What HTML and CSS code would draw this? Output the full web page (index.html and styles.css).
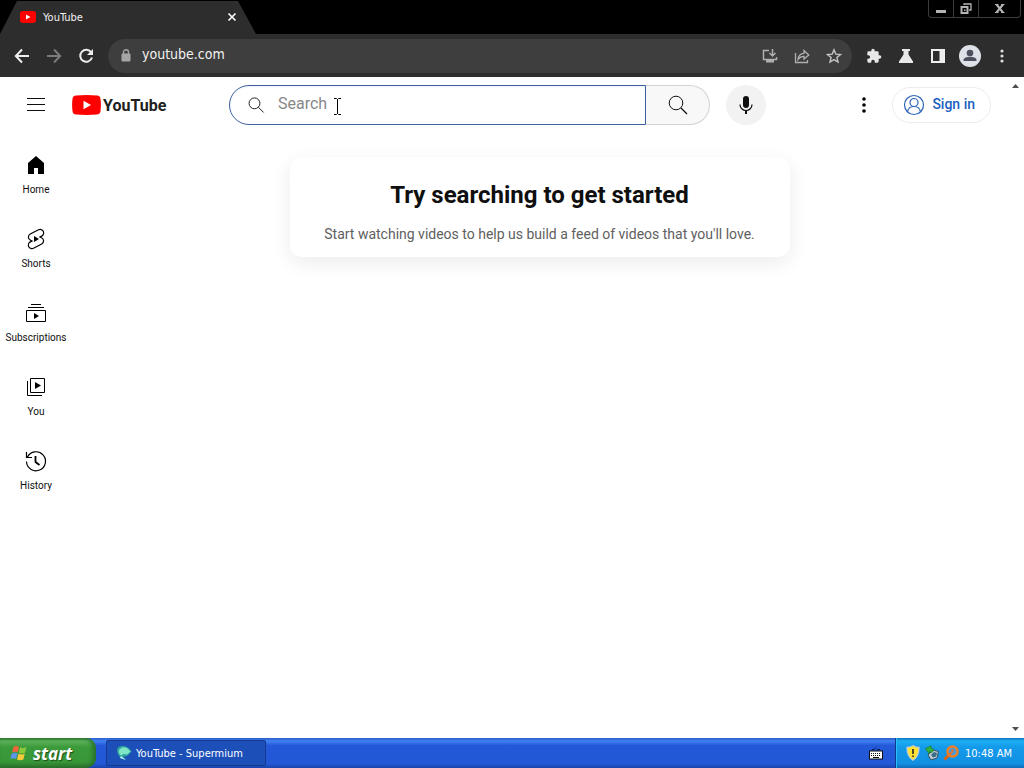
FILE: index.html
```html
<!DOCTYPE html>
<html lang="en">
  <head>
    <meta charset="utf-8" />
    <title>YouTube</title>
    <link rel="stylesheet" href="styles.css">
  </head>
  <body>
    <header class="title-bar">
      <div class="tab">
        <svg class="tab-icon" viewBox="0 0 16 12"><rect width="16" height="12" rx="3" fill="#f00" /><path d="M6 3.5v5L10.5 6z" fill="#fff" /></svg>
        <span class="tab-title">YouTube</span>
        <button class="tab-close" aria-label="Close tab">
          <svg width="10" height="10" viewBox="0 0 10 10"><path d="M1.5 1.5l7 7M8.5 1.5l-7 7" stroke="#fff" stroke-width="1.6" /></svg>
        </button>
      </div>
      <div class="window-controls">
        <button class="win-button" aria-label="Minimize">
          <svg width="12" height="12" viewBox="0 0 12 12"><path d="M1 7h10v3H1z" fill="#b4b4b4" /></svg>
        </button>
        <button class="win-button" aria-label="Restore">
          <svg width="12" height="12" viewBox="0 0 12 12"><path d="M4 2V1h7v6H9" fill="none" stroke="#b4b4b4" stroke-width="1.3" /><path d="M1.500 4h6v6h-6z" fill="none" stroke="#b4b4b4" stroke-width="2" /><path d="M4 6.500h1.500V8H4z" fill="#b4b4b4" /></svg>
        </button>
        <button class="win-button win-close" aria-label="Close">
          <svg width="12" height="12" viewBox="0 0 12 12"><path d="M2.500 1.500l6.500 8M9 1.500l-6.500 8" stroke="#b4b4b4" stroke-width="2" /><path d="M1 1.500h3.500M7 1.500h3.500M1 9.500h3.500M7 9.500h3.500" stroke="#b4b4b4" /></svg>
        </button>
      </div>
    </header>

    <nav class="toolbar">
      <button class="tool-button" aria-label="Back">
        <svg width="16" height="16" viewBox="0 0 16 16"><path d="M15 8H2M8 1.500L1.800 8 8 14.500" fill="none" stroke="#eee" stroke-width="2" /></svg>
      </button>
      <button class="tool-button" aria-label="Forward">
        <svg width="16" height="16" viewBox="0 0 16 16"><path d="M1 8h13M8 1.500L14.200 8 8 14.500" fill="none" stroke="#7a7a7a" stroke-width="2" /></svg>
      </button>
      <button class="tool-button" aria-label="Reload">
        <svg width="16" height="16" viewBox="0 0 16 16"><path d="M13.300 4.500A6 6 0 1 0 14 9.500" fill="none" stroke="#eee" stroke-width="2" /><path d="M15 1v6H9z" fill="#eee" /></svg>
      </button>
      <div class="omnibox">
        <svg width="10" height="13" viewBox="0 0 10 13"><path d="M2.500 5V3.200a2.500 2.500 0 0 1 5 0V5" fill="none" stroke="#a5a5a5" stroke-width="1.400" /><rect x="0.500" y="4.500" width="9" height="8" rx="1" fill="#a5a5a5" /></svg>
        <input class="url" type="text" value="youtube.com" aria-label="Address" />
        <button class="tool-button" aria-label="Install">
          <svg width="16" height="16" viewBox="0 0 16 16"><path d="M7 2.500H1.500v9h13V9" fill="none" stroke="#b0b0b0" stroke-width="1.500" /><path d="M4 12h8v2.500H4z" fill="#b0b0b0" /><path d="M10.500 1v6.500M7.500 5l3 3 3-3" fill="none" stroke="#b0b0b0" stroke-width="1.500" /></svg>
        </button>
        <button class="tool-button" aria-label="Share">
          <svg width="16" height="16" viewBox="0 0 16 16"><path d="M1.500 5v9.500h12V12M4 11.500c.3-4 2.500-6 6-6.200V2.500L14.800 7 10 11V8.300c-3 0-4.500 1-6 3.200z" fill="none" stroke="#b0b0b0" stroke-width="1.300" /></svg>
        </button>
        <button class="tool-button" aria-label="Bookmark">
          <svg width="16" height="16" viewBox="0 0 16 16"><path d="M8 1.800l1.800 4.300 4.700.4-3.600 3 1.100 4.600L8 11.600l-4 2.500 1.100-4.600-3.600-3 4.700-.4z" fill="none" stroke="#c4c4c4" stroke-width="1.400" /></svg>
        </button>
      </div>
      <button class="tool-button" aria-label="Extensions">
        <svg width="16" height="16" viewBox="0 0 24 24"><path d="M20.500 11H19V7a2 2 0 0 0-2-2h-4V3.500a2.500 2.500 0 0 0-5 0V5H4a2 2 0 0 0-2 2v3.800h1.500a2.700 2.700 0 0 1 0 5.400H2V20a2 2 0 0 0 2 2h3.800v-1.500a2.700 2.700 0 0 1 5.400 0V22H17a2 2 0 0 0 2-2v-4h1.500a2.500 2.500 0 0 0 0-5z" fill="#e8e8e8" /></svg>
      </button>
      <button class="tool-button" aria-label="Labs">
        <svg width="16" height="16" viewBox="0 0 16 16"><path d="M4 1h8v2h-1.500v3.500L15 13.500V15H1v-1.500l4.500-7V3H4z" fill="#e8e8e8" /></svg>
      </button>
      <button class="tool-button" aria-label="Side panel">
        <svg width="16" height="16" viewBox="0 0 16 16"><path d="M1 1h14v14H1zM3 3v10h6.500V3z" fill="#eee" fill-rule="evenodd" /></svg>
      </button>
      <button class="tool-button" aria-label="Profile">
        <svg width="22" height="22" viewBox="0 0 22 22"><circle cx="11" cy="11" r="11" fill="#dfe1e8" /><circle cx="11" cy="8" r="3.300" fill="#4c505c" /><path d="M4.500 16v-1c0-2.300 3.500-3.200 6.500-3.200s6.500.9 6.500 3.200v1z" fill="#4c505c" /></svg>
      </button>
      <button class="tool-button" aria-label="Menu">
        <svg width="4" height="14" viewBox="0 0 4 14"><circle cx="2" cy="2" r="1.600" fill="#ddd" /><circle cx="2" cy="7" r="1.600" fill="#ddd" /><circle cx="2" cy="12" r="1.600" fill="#ddd" /></svg>
      </button>
    </nav>

    <div class="viewport">
      <div class="page">
        <div class="masthead">
          <button class="icon-button" aria-label="Guide">
            <svg width="24" height="24" viewBox="0 0 24 24"><path d="M3 5.500h18M3 11.500h18M3 17.500h18" stroke="#0f0f0f" /></svg>
          </button>
          <a class="logo" href="#">
            <svg width="29" height="20" viewBox="0 0 29 20"><path d="M4 .5Q14.500-.4 25 .5q3.200.3 3.500 3.500.8 6 0 12-.3 3.200-3.500 3.500-10.500.9-21 0Q.8 19.200.5 16q-.8-6 0-12Q.8.800 4 .5z" fill="#f00" /><path d="M11.500 5.800v8.400l7.500-4.200z" fill="#fff" /></svg>
            <span>YouTube</span>
          </a>
          <form class="search">
            <div class="search-field">
              <svg width="20" height="20" viewBox="0 0 24 24"><circle cx="9" cy="10" r="6.500" fill="none" stroke="#222" stroke-width="1.200" /><path d="M13.700 14.700l6.300 6.300" stroke="#222" stroke-width="1.200" /></svg>
              <input type="text" placeholder="Search" aria-label="Search" />
              <svg class="cursor" width="9" height="17" viewBox="0 0 9 17"><path d="M1 .5h2.500l1 1 1-1H8M4.500 1v15M1 16.500h2.500l1-1 1 1H8" fill="none" stroke="#000" /></svg>
            </div>
            <button class="search-button" type="button" aria-label="Search">
              <svg width="24" height="24" viewBox="0 0 24 24"><circle cx="10" cy="10" r="6.800" fill="none" stroke="#0f0f0f" /><path d="M15 15l6 6" stroke="#0f0f0f" stroke-width="1.200" /></svg>
            </button>
            <button class="mic-button" type="button" aria-label="Search with your voice">
              <svg width="24" height="24" viewBox="0 0 24 24"><rect x="9" y="3" width="6" height="12" rx="3" fill="#0f0f0f" /><path d="M6 11.500a6 6 0 0 0 12 0" fill="none" stroke="#0f0f0f" stroke-width="1.200" /><path d="M12 17.500V21" stroke="#0f0f0f" stroke-width="2" /></svg>
            </button>
          </form>
          <button class="icon-button" aria-label="Settings">
            <svg width="24" height="24" viewBox="0 0 24 24"><circle cx="12" cy="6" r="1.800" /><circle cx="12" cy="12" r="1.800" /><circle cx="12" cy="18" r="1.800" /></svg>
          </button>
          <a class="sign-in" href="#">
            <svg width="24" height="24" viewBox="0 0 24 24" fill="none" stroke="#2a63b8" stroke-width="1.200"><circle cx="12" cy="12" r="9.500" /><circle cx="12" cy="9.500" r="4" /><path d="M5.500 19c.5-3.500 3-5.500 6.500-5.500s6 2 6.500 5.500" /></svg>
            <span>Sign in</span>
          </a>
        </div>

        <div class="content">
          <nav class="mini-guide">
            <a class="guide-item" href="#">
              <svg width="24" height="24" viewBox="0 0 24 24"><path d="M4 21V10l8-7 8 7v11h-6v-6h-4v6z" /></svg>
              Home
            </a>
            <a class="guide-item" href="#">
              <svg width="24" height="24" viewBox="0 0 24 24"><path d="M14.500 2.800L6.300 7a3.500 3.500 0 0 0 .2 6.300l1.500.7-1.700.9a3.500 3.500 0 0 0 3.200 6.300l8.200-4.200a3.500 3.500 0 0 0-.2-6.300L16 10l1.700-.9a3.500 3.500 0 0 0-3.200-6.300z" fill="none" stroke="#000" stroke-width="1.200" /><path d="M10 9v6l5-3z" /></svg>
              Shorts
            </a>
            <a class="guide-item" href="#">
              <svg width="24" height="24" viewBox="0 0 24 24"><path d="M7 3.500h10M4 6.500h16M2.500 9.500h19v11h-19z" fill="none" stroke="#000" /><path d="M10 12v6l5-3z" /></svg>
              Subscriptions
            </a>
            <a class="guide-item" href="#">
              <svg width="24" height="24" viewBox="0 0 24 24"><path d="M6.500 3.500h14v14h-14zM3.500 6v14.500H18" fill="none" stroke="#000" /><path d="M11 7v7l6-3.500z" /></svg>
              You
            </a>
            <a class="guide-item" href="#">
              <svg width="24" height="24" viewBox="0 0 24 24"><path d="M3.500 8a9.500 9.500 0 1 1-1 4.500M2.500 3v5.500H8" fill="none" stroke="#000" stroke-width="1.200" /><path d="M11.500 7v6l4 3" fill="none" stroke="#000" stroke-width="1.800" /></svg>
              History
            </a>
          </nav>
          <main class="feed">
            <div class="nudge">
              <h1>Try searching to get started</h1>
              <p>Start watching videos to help us build a feed of videos that you'll love.</p>
            </div>
          </main>
        </div>
      </div>
      <div class="scrollbar">
        <svg width="7" height="4" viewBox="0 0 7 4"><path d="M0 4l3.500-4L7 4z" fill="#505050" /></svg>
        <svg width="7" height="4" viewBox="0 0 7 4"><path d="M0 0l3.500 4L7 0z" fill="#505050" /></svg>
      </div>
    </div>

    <footer class="taskbar">
      <button class="start">
        <svg width="18" height="18" viewBox="0 0 18 18"><path d="M3.500 3Q6 1.200 9 2.800L7.700 8.300Q5 7 2 8.500z" fill="#f0653a" /><path d="M10 3.300Q13 4.700 16.500 3L15 8.800q-3 1.500-6.300 0z" fill="#8cc83c" /><path d="M1.800 9.500Q5 8 7.500 9.300L6 15q-3-1.500-5.800 0z" fill="#5a94ee" /><path d="M8.500 9.800q3.200 1.500 6.300 0L13.300 15.500Q10 17 7 15.500z" fill="#fccb3c" /></svg>
        start
      </button>
      <button class="task">
        <svg width="16" height="16" viewBox="0 0 16 16"><path d="M1 6Q1 1 6.500 1q6 0 9 5.500L12 10.500Q9 12 7 11.500L9.500 15Q2 13 1 6z" fill="#2fa39c" /><path d="M3 5Q6 1 11 3l3.500 3.500L11 9.500Q7 8 5 10.500 2 8 3 5z" fill="#7fe5c6" /><path d="M5 11l5 4-6-2z" fill="#b8f4ff" /></svg>
        YouTube - Supermium
      </button>
      <svg class="keyboard" width="14" height="14" viewBox="0 0 14 14"><path d="M3 3.500h2l2-2M8 3.500h3" fill="none" stroke="#0a1a50" /><rect x="0.500" y="5" width="13" height="8" fill="#fff" stroke="#111" /><path d="M2 7.500h10M2 9.500h10" stroke="#111" stroke-dasharray="1 1" /><path d="M4 11.500h6" stroke="#111" /></svg>
      <div class="tray">
        <svg width="16" height="16" viewBox="0 0 16 16"><path d="M8 .8q3 1.700 6 1.700 0 9-6 12.700Q2 11.500 2 2.500q3 0 6-1.700z" fill="#ffe32e" stroke="#c8cdd2" stroke-width="1.300" /><path d="M8 4v5" stroke="#222" stroke-width="1.600" /><path d="M8 10.500v1.600" stroke="#222" stroke-width="1.600" /></svg>
        <svg width="16" height="16" viewBox="0 0 16 16"><path d="M4 10l5-5 5.500 1.500L13 13l-6 2z" fill="#b9cbd3" stroke="#38505c" /><path d="M7 10l3-3 3 1-1 3.500-3 1z" fill="#3c6d86" /><path d="M1.500 3.500L7 .8l.3 2.700 2.700 1-2 3-2.500-1L5 9z" fill="#35b13c" stroke="#16722a" stroke-width="0.600" /></svg>
        <svg width="16" height="16" viewBox="0 0 16 16"><path d="M1.500 14.500L6 10" stroke="#d8641c" stroke-width="3" /><circle cx="9.500" cy="6.500" r="5" fill="#4a9ade" stroke="#f08022" stroke-width="2.400" /><path d="M9.500 6.500L6 10M9.500 4v3" stroke="#e2702a" stroke-width="1.800" /></svg>
        <span>10:48 AM</span>
      </div>
    </footer>
  </body>
</html>
```
FILE: styles.css
```css
* {
  box-sizing: border-box;
}

body {
  margin: 0;
  min-height: 100vh;
  display: flex;
  flex-direction: column;
  background: #fff;
  font-family: Roboto, Arial, sans-serif;
  color: #0f0f0f;
}

button {
  border: none;
  padding: 0;
  background: none;
  display: flex;
  align-items: center;
  justify-content: center;
}

a {
  color: inherit;
  text-decoration: none;
}

svg {
  flex: none;
}

/* browser frame */
.title-bar {
  display: flex;
  justify-content: space-between;
  align-items: flex-start;
  height: 34px;
  background: #000;
}

.tab {
  display: flex;
  align-items: center;
  width: 256px;
  height: 34px;
  padding: 0 18px 0 20px;
  background: #2d2d2d;
  clip-path: polygon(17px 1px, 238px 1px, 256px 100%, 0 100%);
}

.tab-icon {
  width: 16px;
  height: 12px;
}

.tab-title {
  flex: 1;
  margin-left: 7px;
  font: 11px "DejaVu Sans Condensed", "DejaVu Sans", sans-serif;
  color: #f2f2f2;
}

.tab-close {
  width: 12px;
  height: 12px;
}

.window-controls {
  display: flex;
  margin-right: 3px;
  border: 1px solid #3c3c3c;
  border-top: none;
  border-radius: 0 0 4px 4px;
}

.win-button {
  width: 25px;
  height: 17px;
  border-right: 1px solid #3c3c3c;
}

.win-close {
  width: 41px;
  border-right: none;
}

.toolbar {
  display: flex;
  align-items: center;
  height: 43px;
  padding: 0 6px;
  background: #2d2d2d;
}

.tool-button {
  width: 32px;
  height: 32px;
}

.omnibox {
  flex: 1;
  display: flex;
  align-items: center;
  height: 34px;
  margin: 0 6px;
  padding: 0 2px 0 13px;
  border-radius: 17px;
  background: #3e3e3e;
}

.url {
  flex: 1;
  min-width: 0;
  margin-left: 11px;
  padding: 0 0 3px;
  border: none;
  outline: none;
  background: none;
  font: 14px "DejaVu Sans Condensed", "DejaVu Sans", sans-serif;
  color: #f2f2f2;
}

/* page */
.viewport {
  flex: 1;
  display: flex;
}

.page {
  flex: 1;
}

.scrollbar {
  display: flex;
  flex-direction: column;
  justify-content: space-between;
  align-items: center;
  width: 17px;
  padding: 7px 0;
}

.masthead {
  display: flex;
  align-items: center;
  height: 56px;
  padding: 0 16px;
}

.icon-button {
  width: 40px;
  height: 40px;
}

.logo {
  display: flex;
  align-items: center;
  gap: 2px;
  width: 90px;
  margin-left: 16px;
  font: bold 16px Roboto, Arial, sans-serif;
  color: #212121;
}

.search {
  flex: 1;
  display: flex;
  margin: 0 78px 0 67px;
}

.search-field {
  flex: 1;
  position: relative;
  display: flex;
  align-items: center;
  height: 40px;
  padding: 0 4px 0 17px;
  border: 1px solid #3f60a0;
  border-radius: 20px 0 0 20px;
  box-shadow: inset 0 1px 2px #e8f0f4;
}

.search-field input {
  flex: 1;
  min-width: 0;
  margin-left: 11px;
  padding: 0 0 3px;
  border: none;
  outline: none;
  background: none;
  font: 16px Roboto, Arial, sans-serif;
}

.search-field input::placeholder {
  color: #888;
}

.cursor {
  position: absolute;
  left: 103px;
  top: 12px;
}

.search-button {
  width: 64px;
  height: 40px;
  border: 1px solid #d3d3d3;
  border-left: none;
  border-radius: 0 20px 20px 0;
  background: #f8f8f8;
}

.mic-button {
  width: 40px;
  height: 40px;
  margin-left: 16px;
  border-radius: 50%;
  background: #f2f2f2;
}

.sign-in {
  display: flex;
  align-items: center;
  gap: 6px;
  height: 36px;
  margin-left: 8px;
  padding: 0 15px 0 9px;
  border: 1px solid #ececec;
  border-radius: 18px;
  font-size: 14px;
  font-weight: 500;
  color: #1a5fc0;
  white-space: nowrap;
}

.sign-in span {
  padding-bottom: 2px;
}

.content {
  display: flex;
}

.mini-guide {
  width: 72px;
  padding-top: 4px;
}

.guide-item {
  display: flex;
  flex-direction: column;
  align-items: center;
  gap: 6px;
  height: 74px;
  padding-top: 16px;
  font-size: 10px;
  line-height: 14px;
}

.feed {
  flex: 1;
}

.nudge {
  max-width: 500px;
  margin: 24px auto 0;
  padding: 20px 16px 12px;
  border-radius: 12px;
  box-shadow: 0 6px 20px rgba(0, 0, 0, 0.08);
  text-align: center;
}

.nudge h1 {
  margin: 0;
  font-size: 24px;
  line-height: 36px;
}

.nudge p {
  margin: 10px 0 0;
  font-size: 14px;
  line-height: 22px;
  color: #606060;
}

/* taskbar */
.taskbar {
  display: flex;
  align-items: center;
  height: 30px;
  background: linear-gradient(#2a5cc8, #3f82f2 10%, #2359d8 25%, #2258d6 85%, #1a44ac);
  font: 11px "DejaVu Sans Condensed", "DejaVu Sans", sans-serif;
  color: #fff;
}

.start {
  gap: 5px;
  width: 96px;
  height: 30px;
  padding-right: 14px;
  border-radius: 0 10px 10px 0;
  background: linear-gradient(#2f7a30, #5fb35c 10%, #3b9a3a 30%, #389638 80%, #2a6f2a);
  box-shadow: inset -3px 0 4px #27702c;
  font: italic bold 17px "Open Sans", sans-serif;
  color: #fff;
  text-shadow: 1px 1px 1px #1d4c1d;
}

.task {
  justify-content: flex-start;
  gap: 4px;
  width: 160px;
  height: 26px;
  margin-left: 10px;
  padding-left: 9px;
  border: 1px solid #163a92;
  border-radius: 2px;
  background: #1d4fb9;
  font: inherit;
  color: #fff;
}

.keyboard {
  margin-left: auto;
  margin-right: 12px;
}

.tray {
  display: flex;
  align-items: center;
  gap: 3px;
  height: 30px;
  padding: 0 12px 0 9px;
  border-left: 1px solid #0d3a8c;
  background: linear-gradient(#1470c0, #1cb0f4 10%, #149aea 30%, #1290e2 85%, #0f6cb8);
  box-shadow: inset 1px 0 0 #2cc0f8;
}

.tray span {
  margin-left: 3px;
}
```
